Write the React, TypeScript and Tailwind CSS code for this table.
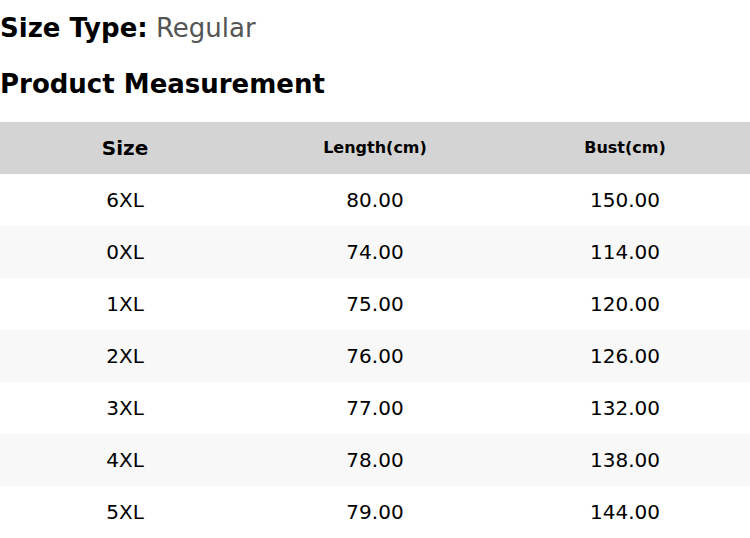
const rows = [
  { size: '6XL', length: '80.00', bust: '150.00' },
  { size: '0XL', length: '74.00', bust: '114.00' },
  { size: '1XL', length: '75.00', bust: '120.00' },
  { size: '2XL', length: '76.00', bust: '126.00' },
  { size: '3XL', length: '77.00', bust: '132.00' },
  { size: '4XL', length: '78.00', bust: '138.00' },
  { size: '5XL', length: '79.00', bust: '144.00' },
];

export default function App() {
  return (
    <div className="w-[750px] bg-white text-black font-['DejaVu_Sans',sans-serif]">
      <p className="text-[26px] leading-[56px]">
        <span className="font-bold">Size Type:</span>{' '}
        <span className="text-[#555555]">Regular</span>
      </p>
      <h2 className="text-[26px] leading-[56px] font-bold">Product Measurement</h2>

      <table className="mt-[10px] w-full table-fixed border-collapse text-center">
        <thead className="bg-[#d4d4d4]">
          <tr className="h-[52px]">
            <th className="text-[20px] font-bold">Size</th>
            <th className="text-[16px] font-bold">Length(cm)</th>
            <th className="text-[16px] font-bold">Bust(cm)</th>
          </tr>
        </thead>
        <tbody>
          {rows.map((row, index) => (
            <tr key={row.size} className={index % 2 === 1 ? 'h-[52px] bg-[#f8f8f8]' : 'h-[52px] bg-white'}>
              <td className="text-[20px]">{row.size}</td>
              <td className="text-[20px]">{row.length}</td>
              <td className="text-[20px]">{row.bust}</td>
            </tr>
          ))}
        </tbody>
      </table>
    </div>
  );
}
